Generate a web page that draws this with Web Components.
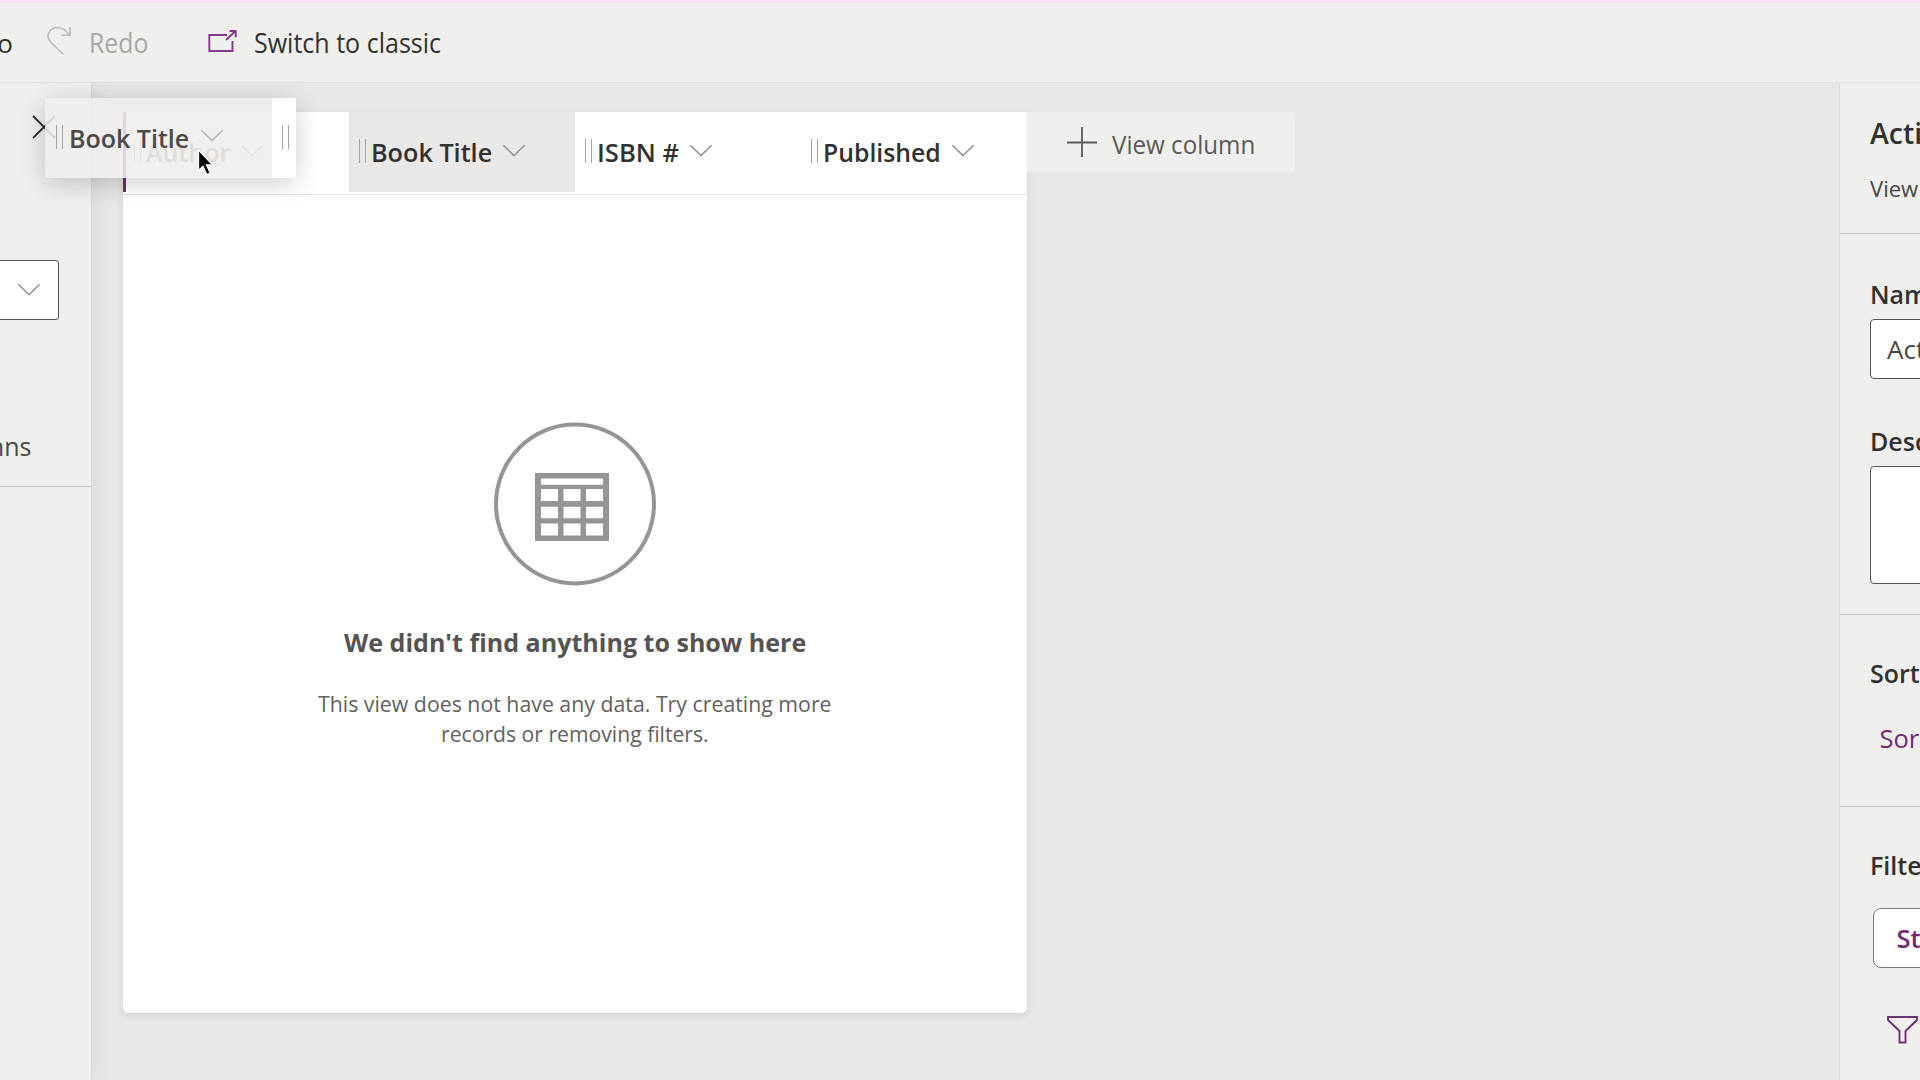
<!DOCTYPE html>
<html lang="en">
<head>
<meta charset="utf-8">
<title>View designer</title>
<style>
html,body{margin:0;height:100%;overflow:hidden}
body{font-family:"Open Sans","Noto Sans",sans-serif;color:#323130;background:#e9e8e6}
</style>
</head>
<body>
<view-designer></view-designer>
<script>
const define=(name,html,init)=>customElements.define(name,class extends HTMLElement{
  constructor(){
    super();
    const t=document.createElement('template');
    t.innerHTML='<style>*{box-sizing:border-box}'+html;
    this.attachShadow({mode:'open'}).append(t.content.cloneNode(true));
  }
  connectedCallback(){ if(init) init(this,this.shadowRoot); }
});

/* Single text run: size in px, w = advance width that the run is condensed to */
define('ui-text',`:host{display:block;height:36px;line-height:36px;white-space:nowrap;flex:none}
span{display:inline-block;transform-origin:0 50%}</style><span><slot></slot></span>`,(el,root)=>{
  el.style.fontSize=el.getAttribute('size')+'px';
  el.style.fontWeight=el.getAttribute('weight')||400;
  const w=+el.getAttribute('w'), s=root.querySelector('span');
  if(w){ el.style.width=w+'px'; s.style.transform='scaleX('+(w/s.offsetWidth)+')'; }
});

define('ui-chevron',`:host{display:block;width:24px;height:13px;flex:none;color:#989796}svg{display:block}</style>
<svg width="24" height="13" fill="none" stroke="currentColor" stroke-width="1.6"><path d="M1.3 1.2 12 11.6 22.7 1.2"/></svg>`);

define('ui-grip',`:host{display:block;width:7px;height:24px;flex:none;border:solid #a3a2a1;border-width:0 1.6px}</style>`);

define('column-header',`:host{display:flex;width:226px;height:80px;padding:13px 0 0 10px;align-items:flex-start;flex:none;background:var(--col-bg,#fff)}
ui-grip{margin:14px 5px 0 0}ui-chevron{margin:19px 0 0 10px}::slotted(ui-text){margin-top:9px}</style>
<ui-grip></ui-grip><slot></slot><ui-chevron></ui-chevron>`);

define('command-bar',`:host{display:flex;height:83px;background:#efefed;border-top:3px solid #fbdffa;border-bottom:1px solid #e2e1e0;align-items:flex-start;position:relative;z-index:3}
.o{width:13px;display:flex;justify-content:flex-end}ui-text{margin-top:21.500px}svg{display:block;flex:none}
.redo{margin:22px 17px 0 34px}.rt{color:#a8a7a6}.sw{margin:25px 16px 0 59px}</style>
<div class="o"><ui-text size="26">o</ui-text></div>
<svg class="redo" width="25" height="34" fill="none" stroke="#bdbcbb" stroke-width="1.6"><path d="M16.500 29.500 4 17.500C-2.600 10.500 3 2.500 10.500 2.500c5 0 7 2 12 7.500M23 2v8.300h-8.300"/></svg>
<ui-text class="rt" size="26.500" w="59">Redo</ui-text>
<svg class="sw" width="31" height="26" fill="none" stroke="#84398a" stroke-width="1.9"><path d="M20 7H2.300v16H25.500V13M19 12 28.500 3M22.500 3h6.200v6.200"/></svg>
<ui-text size="26.500" w="187">Switch to classic</ui-text>`);

define('field-panel',`:host{display:block;width:92px;flex:none;background:#efefed;border-right:1px solid #d8d7d6;box-shadow:2px 0 24px rgba(0,0,0,.07);position:relative;z-index:1;overflow:visible}
.in{overflow:hidden;height:404px;border-bottom:1.5px solid #c9c8c7;display:flex;flex-direction:column;align-items:flex-start}
.x{display:block;margin:31px 0 0 31px;flex:none}
.sel{width:64px;margin:120px 0 0 -5px;height:60px;flex:none;background:#fff;border:1.6px solid #555453;border-radius:3px;padding:22px 0 0 21px}
.w{width:31px;display:flex;justify-content:flex-end;margin-top:108px}.w ui-text{color:#484746}</style>
<div class="in"><svg class="x" width="28" height="26" fill="none" stroke="#323130" stroke-width="1.8"><path d="m2 2 22 22M24 2 2 24"/></svg>
<div class="sel"><ui-chevron></ui-chevron></div>
<div class="w"><ui-text size="26" w="50">mns</ui-text></div></div>`);

define('empty-state',`:host{display:flex;flex-direction:column;align-items:center;color:#555453}
svg{display:block;margin-top:226px}.t{margin-top:38px}.p{margin-top:25.800px;color:#626160}.q{margin-top:-6px;color:#626160}</style>
<svg width="164" height="165" fill="none" stroke="#969594"><ellipse cx="82" cy="83" rx="79" ry="79.500" stroke-width="4"/>
<path fill="#969594" stroke="none" fill-rule="evenodd" transform="translate(0 .5)" d="M42 51.500h74v68H42zM48 57v6.300h62V57zM48 67.500v12h17v-12zM70.500 67.500v12h17v-12zM93 67.500v12h17v-12zM48 85.300v11.500h17V85.300zM70.500 85.300v11.500h17V85.300zM93 85.300v11.500h17V85.300zM48 102v12h17v-12zM70.500 102v12h17v-12zM93 102v12h17v-12z"/></svg>
<ui-text class="t" size="25" weight="700" w="462">We didn't find anything to show here</ui-text>
<ui-text class="p" size="22.500" w="514">This view does not have any data. Try creating more</ui-text>
<ui-text class="q" size="22.500" w="268">records or removing filters.</ui-text>`);

define('view-grid',`:host{display:block;width:904px;height:901px;flex:none;background:#fff;border-radius:0 0 6px 6px;box-shadow:0 3px 8px rgba(60,40,60,.10)}
.h{display:flex;height:83px;border-bottom:1.5px solid #e6e5e4}
.a{border-left:3px solid #742774;padding-left:8px}
.b{--col-bg:#e9e8e6}ui-text{color:#323130}.a ui-text{color:#6b6a69}</style>
<div class="h"><column-header class="a"><ui-text size="25" weight="600" w="84">Author</ui-text></column-header>
<column-header class="b"><ui-text size="25" weight="600" w="121">Book Title</ui-text></column-header>
<column-header><ui-text size="25" weight="600" w="82">ISBN #</ui-text></column-header>
<column-header><ui-text size="25" weight="600" w="118">Published</ui-text></column-header></div>
<empty-state></empty-state>`);

define('add-column',`:host{display:flex;width:268px;height:60px;flex:none;background:#efefed;padding:0 0 0 39px;border-radius:0 3px 3px 0}
svg{display:block;margin:14px 14px 0 0;flex:none}ui-text{margin-top:13.500px;color:#5b5a59}</style>
<svg width="32" height="32" fill="none" stroke="#5b5a59" stroke-width="1.8"><path d="M1 16.500h30M16 1v30"/></svg>
<ui-text size="25" weight="500" w="143">View column</ui-text>`);

define('property-panel',`:host{display:block;width:81px;flex:none;background:#efefed;border-left:1.500px solid #dcdbda;overflow:hidden}
section{padding-left:30px;border-bottom:1.5px solid #c6c5c4;overflow:hidden}
.f{background:#fff;border:1.6px solid #555453;border-radius:4px;width:80px}
svg{display:block}</style>
<section style="height:151px;padding-top:32px"><ui-text size="28.500" weight="600">Acti</ui-text><ui-text size="22.500" w="48" style="margin-top:20px;color:#484746">View</ui-text></section>
<section style="height:381px;padding-top:41.500px"><ui-text size="25" weight="600">Nam</ui-text><div class="f" style="margin-top:7.500px;height:60px;padding:11px 0 0 16px"><ui-text size="26" style="color:#484746">Act</ui-text></div>
<ui-text size="25" weight="600" style="margin-top:44px">Desc</ui-text><div class="f" style="margin-top:7px;height:118px"></div></section>
<section style="height:192px;padding-top:40px"><ui-text size="25" weight="600">Sort</ui-text><ui-text size="25.500" style="margin:28.500px 0 0 9.500px;color:#742774">Sor</ui-text></section>
<section style="height:275px;padding-top:40px;border:0"><ui-text size="25" weight="600">Filte</ui-text><div class="f" style="margin:25px 0 0 3px;height:60px;border-color:#7b7a79;border-radius:8px;padding:11px 0 0 22.500px"><ui-text size="25.500" weight="600" style="color:#742774">St</ui-text></div>
<svg style="margin:47px 0 0 16px" width="33" height="30" fill="none" stroke="#6f3374" stroke-width="1.900"><path d="M2 2h29v3L19.500 16v11.500h-6V16L2 5z"/></svg></section>`);

/* Header being dragged, with the pointer above it */
define('drag-ghost',`:host{display:flex;position:absolute;left:45px;top:98px;width:251px;height:80px;z-index:5;box-shadow:0 5px 26px rgba(0,0,0,.2)}
.m{width:227px;background:rgba(240,238,237,.87);display:flex;padding:12px 0 0 11px}
.e{width:24px;background:#fff;padding:27px 0 0 10px}
.m ui-grip{margin:15px 6px 0 0}.m ui-text{color:#4b4a49;margin-top:10px}.m ui-chevron{margin:19px 0 0 11px;color:#b7b6b5}
svg{position:absolute;left:152px;top:51px}</style>
<div class="m"><ui-grip></ui-grip><ui-text size="25" weight="600" w="120">Book Title</ui-text><ui-chevron></ui-chevron></div><div class="e"><ui-grip></ui-grip></div>
<svg width="18" height="28"><path d="M1.500 1v20.500l4.500-4.200 3.700 8.200 3.500-1.600-3.700-8h6z" fill="#000" stroke="#fff" stroke-width="1.300"/></svg>`);

define('view-designer',`:host{display:flex;flex-direction:column;width:1920px;height:1080px;position:relative;overflow:hidden}
main{display:flex;flex:1;min-height:0}.c{flex:1;display:flex;align-items:flex-start;padding:29px 0 0 31px;background:#e9e8e6;min-width:0}</style>
<command-bar></command-bar>
<main><field-panel></field-panel><div class="c"><view-grid></view-grid><add-column></add-column></div><property-panel></property-panel></main>
<drag-ghost></drag-ghost>`);
</script>
</body>
</html>
